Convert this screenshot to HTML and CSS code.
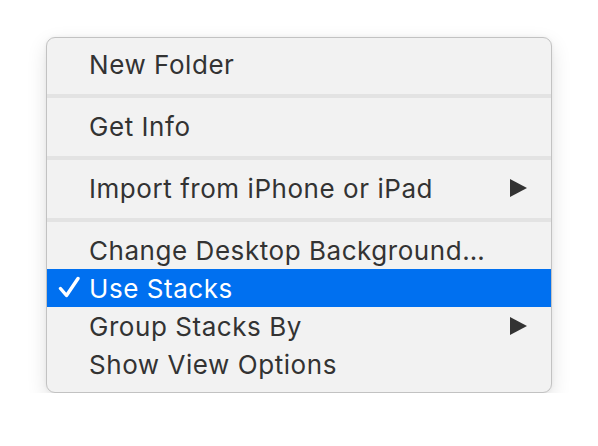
FILE: index.html
```html
<!DOCTYPE html>
<html>
<head>
<meta charset="utf-8">
<link rel="stylesheet" href="styles.css">
</head>
<body>
<div class="stage">
  <div class="menu">
    <div class="item"><span class="label">New Folder</span></div>
    <div class="sep"></div>
    <div class="item"><span class="label">Get Info</span></div>
    <div class="sep"></div>
    <div class="item"><span class="label">Import from iPhone or iPad</span><span class="arrow"></span></div>
    <div class="sep"></div>
    <div class="item"><span class="label">Change Desktop Background…</span></div>
    <div class="item selected"><svg class="check" viewBox="0 0 22 22" width="22" height="22"><path d="M2.5 12.5 L8.5 19.5 L20 2.5" fill="none" stroke="#ffffff" stroke-width="3.4" stroke-linecap="round" stroke-linejoin="round"/></svg><span class="label">Use Stacks</span></div>
    <div class="item"><span class="label">Group Stacks By</span><span class="arrow"></span></div>
    <div class="item"><span class="label">Show View Options</span></div>
  </div>
</div>
</body>
</html>
```
FILE: styles.css
```css
html, body {
  margin: 0;
  padding: 0;
  background: #ffffff;
}
.stage {
  padding: 37px 0 0 46px;
}
.menu {
  width: 504px;
  box-sizing: content-box;
  background: #f2f2f2;
  border: 1px solid #c2c2c2;
  border-radius: 9px;
  padding: 7px 0 9px;
  box-shadow: 0 7px 20px rgba(0,0,0,0.12), 0 0 4px rgba(0,0,0,0.05);
  font-family: "Inter", "Liberation Sans", sans-serif;
  font-size: 26px;
  letter-spacing: 0.55px;
  color: #333333;
  overflow: hidden;
}
.item {
  position: relative;
  display: flex;
  align-items: center;
  height: 38px;
  padding: 0 24px 0 42px;
}
.label {
  flex: 1;
  white-space: nowrap;
}
.item.selected {
  background: #0070f0;
  color: #ffffff;
}
.check {
  position: absolute;
  left: 11px;
  top: 7px;
}
.arrow {
  width: 0;
  height: 0;
  border-top: 9px solid transparent;
  border-bottom: 9px solid transparent;
  border-left: 17px solid #333333;
}
.sep {
  height: 4px;
  background: #e3e3e3;
  margin: 11px 0 9px;
}
```
